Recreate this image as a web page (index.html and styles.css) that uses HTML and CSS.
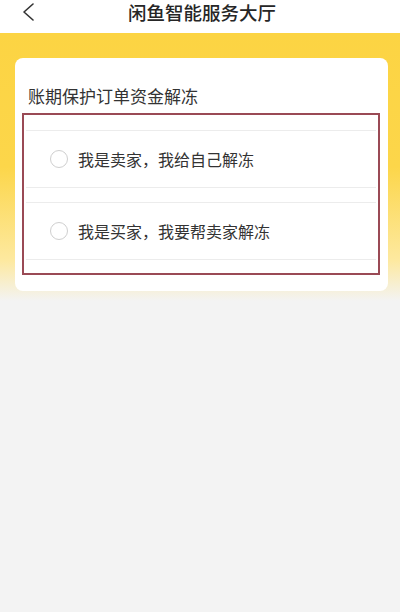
FILE: index.html
```html
<!DOCTYPE html>
<html lang="zh-CN">

<head>
    <meta charset="UTF-8">
    <meta name="viewport" content="width=device-width, initial-scale=1.0">
    <title>闲鱼智能服务大厅</title>
    <link rel="stylesheet" href="styles.css">
</head>

<body>
    <!-- 顶部导航 -->
    <header class="nav">
        <span class="back">
            <svg width="12" height="18" viewBox="0 0 12 18">
                <polyline points="11,1 2,9 11,17" fill="none" stroke="#333" stroke-width="1.6" stroke-linecap="round" stroke-linejoin="round" />
            </svg>
        </span>
        <h1 class="nav-title">闲鱼智能服务大厅</h1>
    </header>

    <!-- 黄色背景区域 -->
    <div class="hero">
        <div class="card">
            <div class="card-title">账期保护订单资金解冻</div>
            <div class="options">
                <div class="option">
                    <span class="radio"></span>
                    <span class="option-text">我是卖家，我给自己解冻</span>
                </div>
                <div class="option">
                    <span class="radio"></span>
                    <span class="option-text">我是买家，我要帮卖家解冻</span>
                </div>
            </div>
        </div>
    </div>
</body>

</html>
```

FILE: styles.css
```css
/* 全局 */
body {
    margin: 0;
    padding: 0;
    min-height: 612px;
    background-color: #f3f3f3;
    font-family: "Noto Sans CJK SC", "Noto Sans", sans-serif;
    color: #333;
}

/* 导航栏 */
.nav {
    height: 33px;
    background-color: #fff;
    display: flex;
    align-items: flex-start;
    justify-content: center;
    position: relative;
}

.back {
    position: absolute;
    left: 22px;
    top: 3px;
    display: flex;
}

.nav-title {
    margin: 0;
    font-size: 18.5px;
    font-weight: 500;
    line-height: 24px;
    color: #262626;
    padding-left: 4px;
}

/* 黄色渐变背景 */
.hero {
    padding: 25px 12px 0 15px;
    height: 243px;
    background: linear-gradient(to bottom, #fcd443 0%, #fcd64a 50%, #fde9a0 85%, #f3f3f3 100%);
}

.card {
    background-color: #fff;
    border-radius: 8px;
    padding: 26px 8px 16px 7px;
}

.card-title {
    font-size: 17px;
    line-height: 24px;
    color: #333;
    padding-left: 6px;
    margin-bottom: 5px;
}

/* 选项列表 */
.options {
    border: 2px solid #9a4a55;
    padding: 15px 2px 13px 2px;
}

.option {
    height: 56px;
    border-top: 1px solid #ececec;
    border-bottom: 1px solid #ececec;
    display: flex;
    align-items: center;
    padding-left: 24px;
    margin-bottom: 14px;
}

.option:last-child {
    margin-bottom: 0;
}

.radio {
    width: 18px;
    height: 18px;
    border: 1px solid #cfcfcf;
    border-radius: 50%;
    box-sizing: border-box;
    margin-right: 10px;
}

.option-text {
    font-size: 16px;
    color: #333;
}
```
